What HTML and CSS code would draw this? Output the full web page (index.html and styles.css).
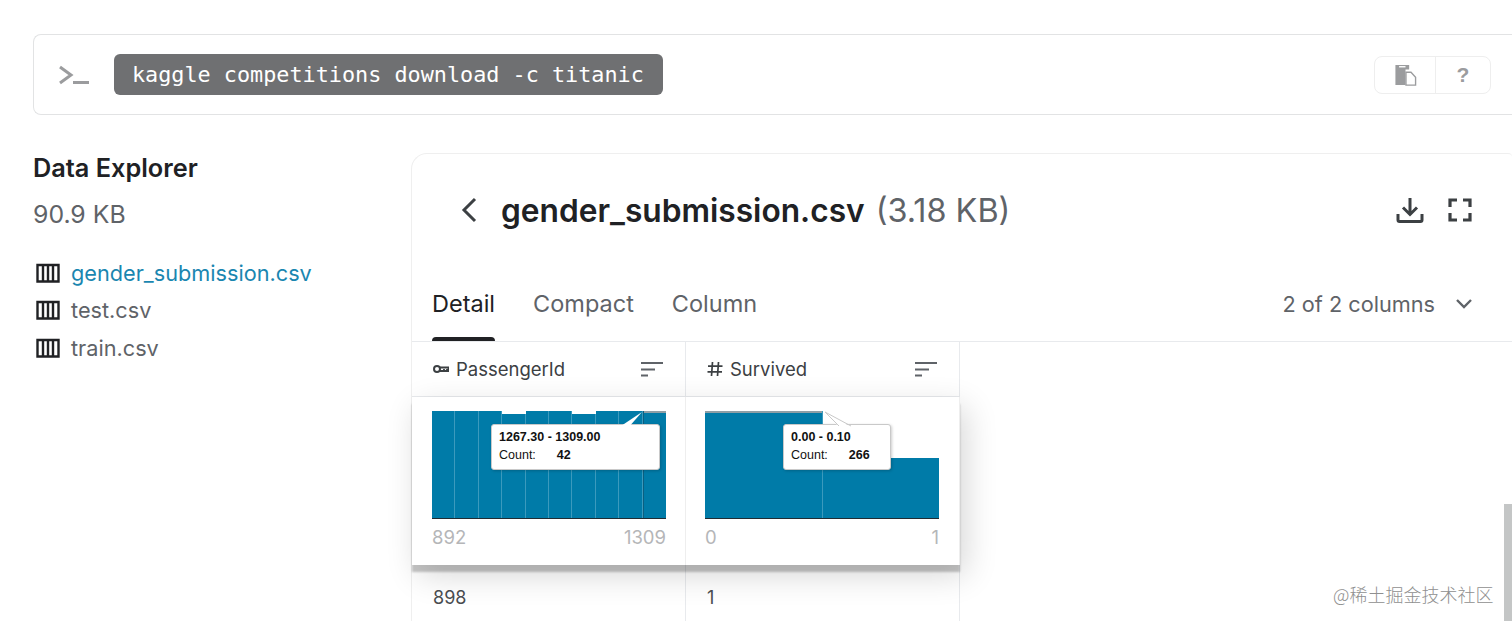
FILE: index.html
```html
<!DOCTYPE html>
<html lang="en">

<head>
  <meta charset="UTF-8">
  <meta name="viewport" content="width=device-width, initial-scale=1.0">
  <title>Titanic data</title>
  <link rel="stylesheet" href="styles.css">
</head>

<body>

  <div class="command-bar">
    <svg class="prompt-icon" width="32" height="20" viewBox="0 0 32 20">
      <path d="M2 2l11 8-11 8" fill="none" stroke="#9b9c9e" stroke-width="3"/>
      <path d="M15 17.5h16" fill="none" stroke="#9b9c9e" stroke-width="3"/>
    </svg>
    <code class="command">kaggle competitions download -c titanic</code>
    <div class="command-actions">
      <button class="action">
        <svg width="23" height="22" viewBox="0 0 24 24">
          <path d="M1 1h15v5h-4v17H1z" fill="#9b9c9e"/>
          <path d="M5 3h7" stroke="#fff" stroke-width="1.5"/>
          <path d="M12.5 9h5.5l5 5.5V23H12.5z" fill="#fff" stroke="#9b9c9e" stroke-width="1.5"/>
        </svg>
      </button>
      <button class="action action-help">?</button>
    </div>
  </div>

  <div class="content">
    <aside class="explorer">
      <h2 class="explorer-title">Data Explorer</h2>
      <div class="explorer-size">90.9 KB</div>
      <ul class="file-list">
        <li class="file file-active">
          <svg class="table-icon" width="24" height="20" viewBox="0 0 24 20"><path d="M1.500 2h21v16.500h-21zM7 2v16M12 2v16M17 2v16" fill="none" stroke="#202124" stroke-width="2.400"/></svg>
          gender_submission.csv
        </li>
        <li class="file">
          <svg class="table-icon" width="24" height="20" viewBox="0 0 24 20"><path d="M1.500 2h21v16.500h-21zM7 2v16M12 2v16M17 2v16" fill="none" stroke="#202124" stroke-width="2.400"/></svg>
          test.csv
        </li>
        <li class="file">
          <svg class="table-icon" width="24" height="20" viewBox="0 0 24 20"><path d="M1.500 2h21v16.500h-21zM7 2v16M12 2v16M17 2v16" fill="none" stroke="#202124" stroke-width="2.400"/></svg>
          train.csv
        </li>
      </ul>
    </aside>

    <section class="panel">
      <div class="panel-head">
        <svg class="back-icon" width="16" height="26" viewBox="0 0 16 26"><path d="M14 2L3 13l11 11" fill="none" stroke="#3c4043" stroke-width="3"/></svg>
        <h1 class="panel-title">gender_submission.csv</h1>
        <span class="panel-size">(3.18 KB)</span>
        <div class="panel-icons">
          <svg width="28" height="26" viewBox="0 0 28 26">
            <path d="M14 1v16M7 10.5l7 7 7-7" fill="none" stroke="#3c4043" stroke-width="3"/>
            <path d="M2 17v6a1.5 1.5 0 0 0 1.5 1.5h21A1.500 1.500 0 0 0 26 23v-6" fill="none" stroke="#3c4043" stroke-width="3"/>
          </svg>
          <svg width="24" height="24" viewBox="0 0 24 24">
            <path d="M9 2H2v7M15 2h7v7M9 22H2v-7M15 22h7v-7" fill="none" stroke="#3c4043" stroke-width="3.200"/>
          </svg>
        </div>
      </div>

      <div class="tabs">
        <span class="tab tab-active">Detail</span>
        <span class="tab">Compact</span>
        <span class="tab">Column</span>
        <span class="column-count">2 of 2 columns
          <svg width="18" height="12" viewBox="0 0 18 12"><path d="M2 2l7 7 7-7" fill="none" stroke="#5f6368" stroke-width="2.400"/></svg>
        </span>
      </div>

      <div class="table">
        <div class="row">
          <div class="col-head">
            <svg width="16" height="10" viewBox="0 0 16 10"><circle cx="4" cy="5" r="3" fill="none" stroke="#3c4043" stroke-width="2"/><path d="M7 3.500h8.500v3.500H7M11 5v3M14 5v3" fill="none" stroke="#3c4043" stroke-width="1.800"/></svg>
            <span class="col-name">PassengerId</span>
            <svg class="sort-icon" width="24" height="16" viewBox="0 0 24 16"><path d="M1 2h22M1 8.500h14M1 14.500h7" stroke="#5f6368" stroke-width="2"/></svg>
          </div>
          <div class="col-head">
            <svg width="16" height="16" viewBox="0 0 16 16"><path d="M5.500 1L4.500 15M11.500 1l-1 14M1 5.200h14.500M.500 10.800H15" fill="none" stroke="#3c4043" stroke-width="1.700"/></svg>
            <span class="col-name">Survived</span>
            <svg class="sort-icon" width="24" height="16" viewBox="0 0 24 16"><path d="M1 2h22M1 8.500h14M1 14.500h7" stroke="#5f6368" stroke-width="2"/></svg>
          </div>
        </div>

        <div class="row row-charts">
          <div class="col-chart">
            <div class="bars">
              <i class="bar" style="height:107px"></i><i class="bar" style="height:107px"></i><i class="bar" style="height:107px"></i>
              <i class="bar" style="height:104px"></i><i class="bar" style="height:107px"></i><i class="bar" style="height:107px"></i>
              <i class="bar" style="height:104px"></i><i class="bar" style="height:107px"></i><i class="bar" style="height:107px"></i>
              <i class="bar bar-hover bar-last" style="height:107px"></i>
            </div>
            <div class="range"><span>892</span><span>1309</span></div>
            <svg class="tip-tail tail-one" width="28" height="18" viewBox="0 0 28 18"><path d="M1 17L25 1 11 17z" fill="#fff"/></svg>
            <div class="tip tip-one">
              <b>1267.30 - 1309.00</b>
              <div class="tip-count"><span>Count:</span><b>42</b></div>
            </div>
          </div>
          <div class="col-chart">
            <div class="bars">
              <i class="bar bar-hover" style="height:107px"></i>
              <i class="bar" style="height:60px"></i>
            </div>
            <div class="range"><span>0</span><span>1</span></div>
            <svg class="tip-tail tail-two" width="30" height="16" viewBox="0 0 30 16"><path d="M1 1l14 15h12z" fill="#fff"/><path d="M15 15L1 1l26 14" fill="none" stroke="#c9c9c9"/></svg>
            <div class="tip tip-two">
              <b>0.00 - 0.10</b>
              <div class="tip-count"><span>Count:</span><b>266</b></div>
            </div>
          </div>
        </div>

        <div class="row row-cells">
          <div class="cell">898</div>
          <div class="cell">1</div>
        </div>
      </div>
    </section>
  </div>

  <div class="scroll-thumb"></div>
  <div class="watermark">@稀土掘金技术社区</div>

</body>

</html>
```

FILE: styles.css
```css
/* Page */
body {
  margin: 0;
  height: 621px;
  overflow: hidden;
  padding: 34px 0 0 33px;
  box-sizing: border-box;
  font-family: Inter, "Liberation Sans", sans-serif;
  color: #202124;
  background: #fff;
}

/* Command bar */
.command-bar {
  display: flex;
  align-items: center;
  height: 81px;
  box-sizing: border-box;
  padding: 0 21px 0 24px;
  border: 1px solid #e2e3e4;
  border-right: none;
  border-radius: 8px 0 0 8px;
}

.prompt-icon {
  margin-right: 24px;
}

.command {
  padding: 0 19px 0 18px;
  height: 41px;
  line-height: 42px;
  border-radius: 6px;
  background: #6f7072;
  color: #fff;
  font-family: "DejaVu Sans Mono", "Liberation Mono", monospace;
  font-size: 21.800px;
}

.command-actions {
  display: flex;
  margin-left: auto;
  height: 36px;
  border: 1px solid #eeeeee;
  border-radius: 8px;
}

.action {
  width: 60px;
  padding: 0;
  border: none;
  background: none;
  display: flex;
  align-items: center;
  justify-content: center;
}

.action + .action {
  width: 55px;
  border-left: 1px solid #eeeeee;
}

.action-help {
  color: #9b9c9e;
  font-family: "Liberation Sans", sans-serif;
  font-weight: bold;
  font-size: 21px;
}

/* Two columns below the bar */
.content {
  display: grid;
  grid-template-columns: 378px 1fr;
  margin-top: 38px;
}

/* Data explorer */
.explorer-title {
  margin: 0;
  font-size: 25.300px;
  line-height: 30px;
  font-weight: 600;
}

.explorer-size {
  margin-top: 16px;
  font-size: 24.800px;
  line-height: 30px;
  color: #5f6368;
}

.file-list {
  list-style: none;
  margin: 25px 0 0;
  padding: 0;
}

.file {
  display: flex;
  align-items: center;
  gap: 11px;
  height: 37.500px;
  font-size: 21.700px;
  color: #5f6368;
}

.table-icon {
  margin-left: 3px;
}

.file-active {
  color: #1a86b0;
}

/* Preview panel */
.panel {
  height: 480px;
  border: 1px solid #efefef;
  border-right: none;
  border-bottom: none;
  border-radius: 16px 4px 0 0;
}

.panel-head {
  display: flex;
  align-items: center;
  height: 112px;
  padding: 0 40px 0 49px;
}

.back-icon {
  margin-right: 24px;
}

.panel-title {
  margin: 0;
  font-size: 31.700px;
  font-weight: 600;
}

.panel-size {
  margin-left: 11px;
  font-size: 32.400px;
  color: #5f6368;
}

.panel-icons {
  display: flex;
  align-items: center;
  gap: 24px;
  margin-left: auto;
}

/* Tabs */
.tabs {
  display: flex;
  align-items: center;
  gap: 38px;
  height: 76px;
  padding: 0 39px 0 20px;
  border-bottom: 1px solid #e8eaed;
  box-sizing: border-box;
  font-size: 23.500px;
  color: #5f6368;
}

.tab {
  position: relative;
}

.tab-active {
  color: #202124;
}

.tab-active::after {
  content: "";
  position: absolute;
  left: 0;
  right: 0;
  bottom: -23px;
  height: 4px;
  border-radius: 4px 4px 0 0;
  background: #202124;
}

.column-count {
  display: flex;
  align-items: center;
  gap: 20px;
  margin-left: auto;
  font-size: 21.700px;
}

/* Table */
.table {
  width: 548px;
}

.row {
  display: flex;
}

.row-charts {
  position: relative;
  background: #fff;
  box-shadow: 0 7px 2px rgba(0, 0, 0, 0.22), 6px 10px 30px rgba(0, 0, 0, 0.16);
}

.col-head {
  display: flex;
  align-items: center;
  gap: 7px;
  width: 274px;
  height: 55px;
  padding: 0 21px;
  box-sizing: border-box;
  border-right: 1px solid #e8eaed;
  border-bottom: 1px solid #e8eaed;
  font-size: 18.500px;
  color: #3c4043;
}

.sort-icon {
  margin-left: auto;
}

.col-chart {
  position: relative;
  width: 274px;
  height: 168px;
  padding: 14px 20px 0;
  box-sizing: border-box;
  border-right: 1px solid #eeeeee;
}

.col-chart:first-child {
  padding-right: 19px;
}

.col-chart + .col-chart {
  padding: 14px 20px 0 19px;
}

.bars {
  display: flex;
  align-items: flex-end;
  height: 107px;
  border-bottom: 1.500px solid #202c33;
}

.bar {
  flex: 1;
  background: #007ba8;
  border-right: 1px solid #3b9abd;
}

.bar:last-child {
  border-right: none;
}

.bar-hover {
  box-shadow: inset 0 2px 0 #8f9fa6;
}

.bar-last {
  border-left: 1px solid #0b5f80;
}

.range {
  display: flex;
  justify-content: space-between;
  margin-top: 7px;
  font-size: 18.500px;
  color: #b5b6b8;
}

/* Chart tooltips */
.tip {
  position: absolute;
  top: 27px;
  box-sizing: border-box;
  height: 46px;
  padding: 3px 7px;
  background: #fff;
  border: 1px solid #c9c9c9;
  border-radius: 3px;
  box-shadow: 1px 1px 3px rgba(0, 0, 0, 0.2);
  font-family: "Liberation Sans", sans-serif;
  font-size: 12.500px;
  line-height: 18px;
  color: #111;
}

.tip-one {
  left: 79px;
  width: 169px;
}

.tip-two {
  left: 97px;
  width: 108px;
}

.tip-count {
  display: flex;
  gap: 21px;
}

.tip-tail {
  position: absolute;
  z-index: 1;
}

.tail-one {
  left: 205px;
  top: 14px;
}

.tail-two {
  left: 138px;
  top: 14px;
}

.cell {
  width: 274px;
  height: 70px;
  padding: 22px 21px 0;
  box-sizing: border-box;
  border-right: 1px solid #e8eaed;
  font-size: 18px;
  color: #4a4d50;
}

/* Overlays */
.scroll-thumb {
  position: absolute;
  right: 0;
  top: 504px;
  width: 8px;
  height: 117px;
  background: #c4c6c6;
}

.watermark {
  position: absolute;
  left: 1333px;
  top: 581px;
  font-family: "Noto Sans CJK SC", "Liberation Sans", sans-serif;
  font-size: 18px;
  font-weight: 300;
  color: #8f8f8f;
}
```
